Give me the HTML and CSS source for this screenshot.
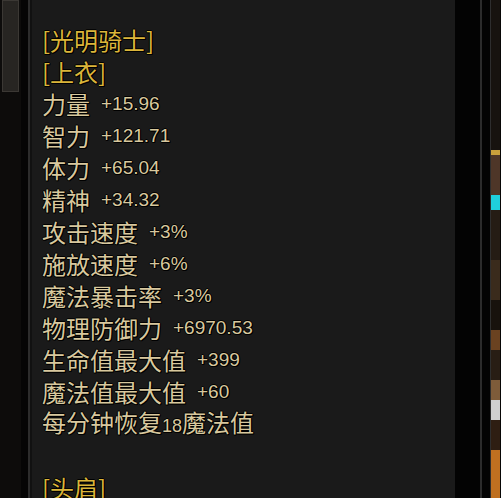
FILE: index.html
```html
<!DOCTYPE html>
<html lang="zh">
<head>
<meta charset="utf-8">
<link rel="stylesheet" href="styles.css">
</head>
<body>
<div class="frame">
  <div class="track"><div class="thumb"></div></div>
  <div class="gapdark"></div>
  <div class="vline"></div>
  <div class="gapsmall"></div>
  <div class="panel">
    <div class="row title">[光明骑士]</div>
    <div class="row title">[上衣]</div>
    <div class="row"><span class="lab">力量</span><span class="val">+15.96</span></div>
    <div class="row"><span class="lab">智力</span><span class="val">+121.71</span></div>
    <div class="row"><span class="lab">体力</span><span class="val">+65.04</span></div>
    <div class="row"><span class="lab">精神</span><span class="val">+34.32</span></div>
    <div class="row"><span class="lab">攻击速度</span><span class="val">+3%</span></div>
    <div class="row"><span class="lab">施放速度</span><span class="val">+6%</span></div>
    <div class="row"><span class="lab">魔法暴击率</span><span class="val">+3%</span></div>
    <div class="row"><span class="lab">物理防御力</span><span class="val">+6970.53</span></div>
    <div class="row"><span class="lab">生命值最大值</span><span class="val">+399</span></div>
    <div class="row"><span class="lab">魔法值最大值</span><span class="val">+60</span></div>
    <div class="row"><span class="lab">每分钟恢复<span class="num">18</span>魔法值</span></div>
    <div class="row"></div>
    <div class="row title">[头肩]</div>
  </div>
  <div class="blackcol"></div>
  <div class="vline"></div>
  <div class="blacknarrow"></div>
  <div class="vline thin"></div>
  <div class="strip">
    <div class="seg s1"></div>
    <div class="seg s2"></div>
    <div class="seg s3"></div>
    <div class="seg s4"></div>
    <div class="seg s5"></div>
    <div class="seg s6"></div>
    <div class="seg s7"></div>
    <div class="seg s8"></div>
    <div class="seg s9"></div>
    <div class="seg s10"></div>
    <div class="seg s11"></div>
    <div class="seg s12"></div>
    <div class="seg s13"></div>
  </div>
</div>
</body>
</html>
```

FILE: styles.css
```css
html, body {
  margin: 0;
  padding: 0;
  background: #080706;
  overflow: hidden;
}
.frame {
  display: flex;
  width: 501px;
  height: 498px;
}
.track {
  width: 21px;
  background: #0d0c0b;
  flex: none;
}
.thumb {
  margin-left: 2px;
  width: 15px;
  height: 90px;
  background: #272522;
  border: 1px solid #3b3834;
}
.gapdark {
  width: 7px;
  background: #050505;
  flex: none;
}
.vline {
  width: 2px;
  background: #2c2c2c;
  flex: none;
}
.vline.thin {
  width: 1px;
  background: #2e2e2e;
}
.gapsmall {
  width: 2px;
  background: #111;
  flex: none;
}
.panel {
  width: 413px;
  flex: none;
  background: #1a1a1a;
  padding: 24px 0 0 10px;
  font-family: "Noto Sans CJK SC", "Noto Sans", sans-serif;
  font-size: 24px;
  color: #d8c89e;
  text-shadow: 1px 0 0 #000, -1px 0 0 #000, 0 1px 0 #000, 0 -1px 0 #000, 1px 1px 0 #000;
}
.row {
  height: 32px;
  line-height: 32px;
  white-space: nowrap;
  display: flex;
  align-items: center;
}
.title {
  color: #dbb53a;
}
.val {
  margin-left: 11px;
  font-family: "Liberation Sans", Arial, sans-serif;
  font-size: 19px;
}
.num {
  font-family: "Liberation Sans", Arial, sans-serif;
  font-size: 18px;
}
.blackcol {
  width: 25px;
  background: #030303;
  flex: none;
}
.blacknarrow {
  width: 8px;
  background: #040404;
  flex: none;
}
.strip {
  width: 9px;
  flex: none;
  display: flex;
  flex-direction: column;
  background: #1a1512;
}
.seg { width: 100%; }
.s1 { height: 150px; background: #17130f; }
.s2 { height: 5px; background: #c9a03c; }
.s3 { height: 40px; background: #4e3628; }
.s4 { height: 15px; background: #1fcfdc; }
.s5 { height: 50px; background: #251c14; }
.s6 { height: 40px; background: #3a2b1c; }
.s7 { height: 30px; background: #18120d; }
.s8 { height: 20px; background: #6a4220; }
.s9 { height: 30px; background: #281d14; }
.s10 { height: 20px; background: #7e5c3a; }
.s11 { height: 20px; background: #cfcfcf; }
.s12 { height: 30px; background: #2e1e12; }
.s13 { height: 48px; background: #bf7020; }
```
